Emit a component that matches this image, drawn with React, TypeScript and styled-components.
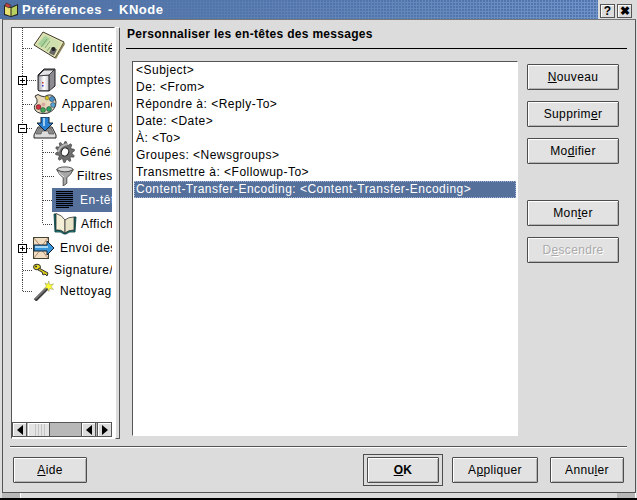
import React from 'react';
import styled, { createGlobalStyle } from 'styled-components';

const GlobalStyle = createGlobalStyle`
  html, body { margin: 0; padding: 0; background: #dcdcdc; }
  body { font-family: "Liberation Sans", Arial, sans-serif; font-size: 12px; color: #000; }
`;

const Window = styled.div`
  width: 637px;
  height: 500px;
  box-sizing: border-box;
  display: flex;
  flex-direction: column;
  background: #dcdcdc;
  border-bottom: 2px solid #000;
  overflow: hidden;
`;

const TitleBar = styled.div`
  height: 19px;
  flex: none;
  display: flex;
  align-items: stretch;
`;

const TitleFill = styled.div`
  flex: 1;
  display: flex;
  align-items: center;
  padding-left: 3px;
  background-color: #6086bd;
  background-image:
    radial-gradient(circle at 1px 1px, #4f74ab 0.7px, transparent 0.8px),
    linear-gradient(90deg, #4f6f9f, #6f93c8);
  background-size: 3px 3px, 100% 100%;
`;

const TitleText = styled.span`
  margin-left: 3px;
  font-weight: 700;
  font-size: 13px;
  color: #fff;
  letter-spacing: 0.5px;
  word-spacing: 2px;
  white-space: pre;
`;

const TitleButtons = styled.div`
  flex: none;
  display: flex;
  align-items: flex-start;
  padding: 4px 5px 0 2px;
  gap: 2px;
`;

const TitleButton = styled.div`
  box-sizing: border-box;
  width: 15px;
  height: 14px;
  border: 1px solid #555;
  box-shadow: inset 1px 1px 0 #fff;
  background: #dcdcdc;
  display: flex;
  align-items: center;
  justify-content: center;
  font-weight: 700;
  font-size: 12px;
`;

const Frame = styled.div`
  flex: 1;
  min-height: 0;
  margin: 0 1px 0 2px;
  border: 1px solid #555;
  border-top: 1px solid #777;
  display: flex;
  flex-direction: column;
  padding: 7px 8px 0 8px;
`;

const Grip = styled.div`
  flex: none;
  height: 5px;
  margin: 0 1px 0 2px;
  display: flex;
  justify-content: space-between;
`;

const GripCorner = styled.div`
  width: 18px;
  background: #b8b8b8;
  border-right: 1px solid #fff;
`;

const Main = styled.div`
  display: flex;
  height: 412px;
  flex: none;
`;

const TreePanel = styled.div`
  width: 104px;
  box-sizing: border-box;
  display: flex;
  flex-direction: column;
  background: #fff;
  border: 1px solid #555;
  border-right-color: #fff;
  border-bottom-color: #fff;
  flex: none;
  overflow: hidden;
`;

const TreeList = styled.div`
  flex: 1;
  overflow: hidden;
`;

const Row = styled.div<{ $h: number }>`
  height: ${({ $h }) => $h}px;
  display: flex;
  align-items: center;
  white-space: nowrap;
  width: 100px;
  overflow: hidden;
`;

const RowIcon = styled.span<{ $selected?: boolean; $lift?: number }>`
  display: flex;
  align-items: center;
  flex: none;
  box-sizing: border-box;
  padding-bottom: ${({ $lift }) => $lift || 0}px;
  background: ${({ $selected }) => ($selected ? '#55709b' : 'transparent')};
  height: 100%;
`;

const RowLabel = styled.span<{ $selected?: boolean; $gap: number }>`
  display: flex;
  align-items: center;
  height: ${({ $selected }) => ($selected ? '100%' : 'auto')};
  padding-left: ${({ $gap }) => $gap}px;
  flex: 1;
  letter-spacing: 0.45px;
  background: ${({ $selected }) => ($selected ? '#55709b' : 'transparent')};
  color: ${({ $selected }) => ($selected ? '#fff' : '#000')};
`;

const HScroll = styled.div`
  height: 15px;
  box-sizing: content-box;
  flex: none;
  display: flex;
  background: #b8b8b8;
  border: 0;
  margin: 0 2px 1px 0;
  gap: 1px;
  outline: 1px solid #555;
  outline-offset: -1px;
`;

const ScrollArrow = styled.div`
  width: 15px;
  flex: none;
  box-sizing: border-box;
  background: #dcdcdc;
  border: 1px solid #555;
  box-shadow: inset 1px 1px 0 #fff;
  display: flex;
  align-items: center;
  justify-content: center;
`;

const ScrollThumb = styled.div`
  width: 22px;
  flex: none;
  box-sizing: border-box;
  border: 1px solid #555;
  border-left: 0;
  background: repeating-linear-gradient(90deg, #e4e4e4 0 2px, #c4c4c4 2px 3px);
  background-size: 12px 100%;
  background-position: center;
  background-repeat: no-repeat;
  background-color: #e4e4e4;
  box-shadow: inset 1px 1px 0 #fff;
`;

const ScrollTrough = styled.div`
  flex: 1;
`;

const Splitter = styled.div`
  width: 5px;
  flex: none;
  box-sizing: border-box;
  border: 1px solid #555;
  border-top-color: #fff;
  border-left-color: #fff;
  background: #dcdcdc;
  height: 412px;
  border-radius: 1px;
`;

const Page = styled.div`
  flex: 1;
  min-width: 0;
  display: flex;
  flex-direction: column;
`;

const Heading = styled.div`
  font-weight: 700;
  font-size: 12px;
  letter-spacing: 0.3px;
  height: 22px;
  flex: none;
  box-sizing: border-box;
  padding: 0 0 7px 1px;
  display: flex;
  align-items: center;
  border-bottom: 1px solid #000;
  margin-left: 6px;
`;

const Content = styled.div`
  flex: 1;
  display: flex;
  padding: 12px 8px 0 12px;
  min-height: 0;
`;

const ListBox = styled.div`
  width: 386px;
  height: 375px;
  box-sizing: border-box;
  flex: none;
  background: #fff;
  border: 1px solid #555;
  border-right-color: #fff;
  border-bottom-color: #fff;
  padding: 0 1px;
  overflow: hidden;
`;

const ListItem = styled.div<{ $selected?: boolean }>`
  height: 17px;
  line-height: 17px;
  padding-left: 2px;
  white-space: pre;
  letter-spacing: 0.48px;
  background: ${({ $selected }) => ($selected ? '#55709b' : 'transparent')};
  color: ${({ $selected }) => ($selected ? '#fff' : '#000')};
  outline: ${({ $selected }) => ($selected ? '1px dotted #9fb4d4' : 'none')};
  outline-offset: -1px;
`;

const ButtonColumn = styled.div`
  flex: none;
  margin-left: 9px;
  padding-top: 3px;
  display: flex;
  flex-direction: column;
  width: 92px;
`;

const ActionSlot = styled.div<{ $top: number }>`
  margin-top: ${({ $top }) => $top}px;
  display: flex;
`;

const PushButton = styled.button<{ $w?: number; $bold?: boolean }>`
  box-sizing: border-box;
  height: 26px;
  width: ${({ $w }) => ($w ? `${$w}px` : '100%')};
  padding: 0;
  border: 1px solid #4d4d4d;
  border-radius: 1px;
  background: #e2e2e2;
  box-shadow: inset 1px 1px 0 #fff, inset -1px -1px 0 #b4b4b4;
  font-family: inherit;
  font-size: 12px;
  letter-spacing: 0.35px;
  font-weight: ${({ $bold }) => ($bold ? 700 : 400)};
  color: ${({ disabled }) => (disabled ? '#aaa' : '#000')};
  text-shadow: ${({ disabled }) => (disabled ? '1px 1px 0 #fff' : 'none')};
`;

const Separator = styled.div`
  height: 1px;
  flex: none;
  background: #555;
  box-shadow: 0 1px 0 #fff;
  margin: 7px 0 0 -1px;
`;

const Footer = styled.div`
  display: flex;
  align-items: center;
  padding: 7px 3px 0 2px;
`;

const Spacer = styled.div`
  flex: 1;
`;

const DefaultRing = styled.div`
  box-sizing: border-box;
  width: 80px;
  height: 32px;
  padding: 2px 3px;
  border: 1px solid #4d4d4d;
  display: flex;
  margin-right: 9px;
`;

const FooterGap = styled.div`
  width: 12px;
`;

const GutterSvg = styled.svg`
  flex: none;
  display: block;
  shape-rendering: crispEdges;
`;

type GutterProps = { w: number; h: number; depth: number; last?: boolean; expander?: '+' | '-' };

// dotted tree lines and the +/- box for one row
const Gutter = ({ w, h, depth, last, expander }: GutterProps) => {
  const mid = Math.round(h / 2);
  const x = depth === 0 ? 10.5 : 30.5;
  return (
    <GutterSvg width={w} height={h}>
      <g stroke="#444" strokeDasharray="1 1" fill="none">
        {depth === 1 && <line x1={10.5} y1={0} x2={10.5} y2={h} />}
        <line x1={x} y1={0} x2={x} y2={last ? mid : h} />
        <line x1={x} y1={mid + 0.5} x2={w} y2={mid + 0.5} />
      </g>
      {expander && (
        <g>
          <rect x={6.5} y={mid - 3.5} width={8} height={8} fill="#fff" stroke="#000" />
          <line x1={8} y1={mid + 0.5} x2={13} y2={mid + 0.5} stroke="#000" />
          {expander === '+' && <line x1={10.5} y1={mid - 2} x2={10.5} y2={mid + 3} stroke="#000" />}
        </g>
      )}
    </GutterSvg>
  );
};

const IdentityIcon = () => (
  <svg width="32" height="28" viewBox="0 0 32 28">
    <path d="M1 14 L10 1 L31 11 L22 27 Z" fill="#e6e2b4" stroke="#3a3a2a" />
    <path d="M3 14 L11 3 L28 11.500 L21 24 Z" fill="#cfe0ae" />
    <path d="M5 13 L12 5 L17 7.500 L10 16 Z" fill="#a8d09a" />
    <path d="M8 16 l6 -8 M12 17 l5 -7 M14 20 l3 -4" stroke="#7fa870" strokeWidth="1" />
    <path d="M19 16 l5 2.500 -3 6 -5 -2.500 Z" fill="#666" />
    <circle cx="20.500" cy="18" r="2" fill="#222" />
    <path d="M22 27 L31 11 L32 13 L23 28 Z" fill="#8a8656" />
  </svg>
);

const ServerIcon = () => (
  <svg width="20" height="24" viewBox="0 0 20 24">
    <defs>
      <linearGradient id="srvFront" x1="0" x2="1" y1="0" y2="0">
        <stop offset="0" stopColor="#aaaab4" />
        <stop offset="0.5" stopColor="#ffffff" />
        <stop offset="1" stopColor="#c8c8d0" />
      </linearGradient>
    </defs>
    <path d="M2 7 L8 1 H19 V18 L13 23 H3 L2 22 Z" fill="#88888f" stroke="#222" />
    <path d="M3 8 H13 V22 H3 Z" fill="url(#srvFront)" />
    <path d="M14 7 L18 2 V17 L14 22 Z" fill="#8c8c92" />
    <path d="M2 8 L8 2 H18 L13 7 Z" fill="#e4e4e8" stroke="#222" strokeWidth=".8" />
    <path d="M13 7 V23" stroke="#222" />
    <rect x="6" y="14" width="1.500" height="1.500" fill="#c33" />
    <rect x="6" y="17" width="1.500" height="1.500" fill="#33c" />
  </svg>
);

const PaletteIcon = () => (
  <svg width="24" height="24" viewBox="0 0 24 24">
    <path d="M2 4 Q5 1 8 4 Q11 6 15 3 Q22 2 23 10 Q23 18 15 21 Q6 23 2 18 Q0 13 4 11 Q5 8 2 4 Z" fill="#e6d9bc" stroke="#333" />
    <circle cx="14" cy="6" r="1.900" fill="#d8c818" stroke="#432" strokeWidth=".4" />
    <circle cx="19" cy="7" r="2.600" fill="#4a90c8" stroke="#234" strokeWidth=".5" />
    <circle cx="20" cy="13" r="2.400" fill="#5aa4d4" stroke="#234" strokeWidth=".5" />
    <circle cx="16" cy="17" r="2.500" fill="#30a060" stroke="#234" strokeWidth=".5" />
    <circle cx="10" cy="18" r="2.500" fill="#40a850" stroke="#234" strokeWidth=".5" />
    <circle cx="5.500" cy="15" r="2.500" fill="#d03040" stroke="#422" strokeWidth=".5" />
    <circle cx="10.500" cy="12.500" r="2" fill="#d8a8a0" />
  </svg>
);

const InboxIcon = () => (
  <svg width="24" height="22" viewBox="0 0 24 22">
    <path d="M5 10 H19 L23 18 V21 H1 V18 Z" fill="#dcdcdc" stroke="#222" />
    <path d="M3 17 H8 L9 14 H15 L16 17 H21 L18 11 H6 Z" fill="#8c8c8c" stroke="#444" strokeWidth=".6" />
    <path d="M8 0 H16 V6 H20 L12 14 L4 6 H8 Z" fill="#2a7fd0" stroke="#123" />
    <path d="M10 1 H12 V9 H10 Z" fill="#9fd0f0" />
  </svg>
);

// tilted gear outline worked out from tooth count
const gearPath = () => {
  const pts: string[] = [];
  const teeth = 10;
  for (let i = 0; i < teeth * 4; i++) {
    const a = (i / (teeth * 4)) * Math.PI * 2;
    const r = i % 4 < 2 ? 10.5 : 7.8;
    const ex = Math.cos(a) * r * 0.95;
    const ey = Math.sin(a) * r * 1.05;
    const px = 11 + ex * 0.92 + ey * 0.28;
    const py = 12 + ey * 0.92 - ex * 0.28;
    pts.push(`${px.toFixed(1)} ${py.toFixed(1)}`);
  }
  return `M${pts.join(' L')} Z`;
};

const GearIcon = () => (
  <svg width="22" height="24" viewBox="0 0 22 24">
    <path d={gearPath()} fill="#6e6e6e" stroke="#333" strokeWidth=".6" />
    <path d="M4 12 Q6 5 14 4" stroke="#b4b4b4" strokeWidth="2" fill="none" />
    <ellipse cx="11" cy="12" rx="3.600" ry="4.200" transform="rotate(25 11 12)" fill="#fff" stroke="#222" />
  </svg>
);

const FunnelIcon = () => (
  <svg width="20" height="20" viewBox="0 0 20 22">
    <ellipse cx="10" cy="4" rx="9" ry="3" fill="#d8d8d8" stroke="#444" />
    <path d="M1 4 Q3 9 8 13 V22 L12 19 V13 Q17 9 19 4 Q10 9 1 4 Z" fill="#a8a8a8" stroke="#444" />
    <path d="M3 7 Q6 10 9 12" stroke="#eee" fill="none" />
  </svg>
);

const LinesIcon = () => (
  <svg width="24" height="24" viewBox="0 0 24 24" shapeRendering="crispEdges">
    <rect x="4" y="3" width="17" height="16" fill="#3d5887" />
    {[3, 5, 7, 9, 11, 13, 15, 17].map(y => (
      <rect key={y} x="4" y={y} width="17" height="1" fill="#000" />
    ))}
    <rect x="4" y="19" width="13" height="1" fill="#000" />
  </svg>
);

const BookIcon = () => (
  <svg width="24" height="22" viewBox="0 0 24 22">
    <path d="M1 1 L2 19 Q8 18 11 21 H13 Q16 18 22 19 L23 4 L21 4 L21 17 Q15 17 12 20 Q8 16 3 17 L3 1 Z" fill="#157a7a" stroke="#033" strokeWidth=".8" />
    <path d="M3 0.500 Q9 2 12 7 V20 Q8 16 3 17 Z" fill="#f4f0d8" stroke="#333" strokeWidth=".8" />
    <path d="M12 7 Q15 4 21 4 V17 Q15 17 12 20 Z" fill="#e8e4c8" stroke="#333" strokeWidth=".8" />
  </svg>
);

const SendIcon = () => (
  <svg width="22" height="22" viewBox="0 0 22 22">
    <rect x="0.500" y="0.500" width="15" height="21" fill="#f0dcc0" stroke="#443" />
    <path d="M1 1 L8 10 L15 1 M1 21 L8 12 L15 21" fill="none" stroke="#b08c70" />
    <path d="M1 8 H14 V4 L21 11 L14 18 V14 H1 Z" fill="#3a94d8" stroke="#123" />
    <path d="M2 9 H15 V11 H2 Z" fill="#a8d8f4" />
  </svg>
);

const KeyIcon = () => (
  <svg width="16" height="14" viewBox="0 0 16 14">
    <ellipse cx="4" cy="4" rx="3.500" ry="2.800" fill="#e8d820" stroke="#333" />
    <path d="M6 5 L15 10 L14 13 L12 11 L10 12 L9 9 L5 7 Z" fill="#d8c818" stroke="#333" />
    <circle cx="3" cy="3.500" r="1" fill="#333" />
  </svg>
);

const WandIcon = () => (
  <svg width="22" height="21" viewBox="0 0 22 22">
    <path d="M1 20 L14 7 L16 9 L3 22 Z" fill="#444" stroke="#222" />
    <path d="M2 20 L14 8" stroke="#aaa" />
    <path d="M16 1 L17 5 L21 4 L18.500 7 L21 10 L17 9 L16 12 L14.500 8.500 L11 9 L13.500 6.500 L12 3 L15 4.500 Z" fill="#ffff30" stroke="#886" strokeWidth=".5" />
  </svg>
);

const Arrow = ({ dir }: { dir: 'left' | 'right' }) => (
  <svg width="6" height="10" viewBox="0 0 6 10">
    <path d={dir === 'left' ? 'M6 0 V10 L0 5 Z' : 'M0 0 V10 L6 5 Z'} fill="#000" />
  </svg>
);

const AppIcon = () => (
  <svg width="16" height="16" viewBox="0 0 16 16">
    <path d="M1 3 L8 5 L15 2 V13 L8 15 L1 13 Z" fill="#222" />
    <path d="M2 4 L7.500 6 V14 L2 12 Z" fill="#e8e070" />
    <path d="M8.500 6 L14 3.500 V12 L8.500 14 Z" fill="#b8d060" />
    <path d="M3 1 L8 3 L6 6 L2 4 Z" fill="#c04040" stroke="#222" strokeWidth=".5" />
  </svg>
);

type TreeRow = {
  label: string; h: number; w: number; depth: number; icon: React.ReactNode;
  gap: number; expander?: '+' | '-'; last?: boolean; selected?: boolean; lift?: number;
};

const tree: TreeRow[] = [
  { label: 'Identité', h: 39, w: 21, depth: 0, icon: <IdentityIcon />, gap: 7, lift: 6 },
  { label: 'Comptes', h: 25, w: 24, depth: 0, icon: <ServerIcon />, gap: 4, expander: '+' },
  { label: 'Apparence', h: 24, w: 21, depth: 0, icon: <PaletteIcon />, gap: 5 },
  { label: 'Lecture des news', h: 24, w: 21, depth: 0, icon: <InboxIcon />, gap: 3, expander: '-' },
  { label: 'Général', h: 24, w: 42, depth: 1, icon: <GearIcon />, gap: 4 },
  { label: 'Filtres', h: 24, w: 43, depth: 1, icon: <FunnelIcon />, gap: 2 },
  { label: 'En-têtes', h: 24, w: 40, depth: 1, icon: <LinesIcon />, gap: 4, selected: true },
  { label: 'Affichage', h: 24, w: 41, depth: 1, icon: <BookIcon />, gap: 4, last: true },
  { label: 'Envoi des news', h: 23, w: 21, depth: 0, icon: <SendIcon />, gap: 5, expander: '+' },
  { label: 'Signature/Identité', h: 21, w: 21, depth: 0, icon: <KeyIcon />, gap: 5 },
  { label: 'Nettoyage', h: 21, w: 21, depth: 0, icon: <WandIcon />, gap: 5, last: true },
];

const headers = [
  '<Subject>',
  'De: <From>',
  'Répondre à: <Reply-To>',
  'Date: <Date>',
  'À: <To>',
  'Groupes: <Newsgroups>',
  'Transmettre à: <Followup-To>',
];

const U = styled.span`
  text-decoration: underline;
`;

export default function App() {
  return (
    <Window>
      <GlobalStyle />
      <TitleBar>
        <TitleFill>
          <AppIcon />
          <TitleText>Préférences - KNode</TitleText>
        </TitleFill>
        <TitleButtons>
          <TitleButton>?</TitleButton>
          <TitleButton>✖</TitleButton>
        </TitleButtons>
      </TitleBar>
      <Frame>
        <Main>
          <TreePanel>
            <TreeList>
              {tree.map(row => (
                <Row key={row.label} $h={row.h}>
                  <Gutter w={row.w} h={row.h} depth={row.depth} expander={row.expander} last={row.last} />
                  <RowIcon $selected={row.selected} $lift={row.lift}>{row.icon}</RowIcon>
                  <RowLabel $selected={row.selected} $gap={row.gap}>{row.label}</RowLabel>
                </Row>
              ))}
            </TreeList>
            <HScroll>
              <ScrollArrow><Arrow dir="left" /></ScrollArrow>
              <ScrollThumb />
              <ScrollTrough />
              <ScrollArrow><Arrow dir="left" /></ScrollArrow>
              <ScrollArrow><Arrow dir="right" /></ScrollArrow>
            </HScroll>
          </TreePanel>
          <Splitter />
          <Page>
            <Heading>Personnaliser les en-têtes des messages</Heading>
            <Content>
              <ListBox>
                {headers.map(h => <ListItem key={h}>{h}</ListItem>)}
                <ListItem $selected>Content-Transfer-Encoding: &lt;Content-Transfer-Encoding&gt;</ListItem>
              </ListBox>
              <ButtonColumn>
                <ActionSlot $top={0}><PushButton><U>N</U>ouveau</PushButton></ActionSlot>
                <ActionSlot $top={11}><PushButton>Supprim<U>e</U>r</PushButton></ActionSlot>
                <ActionSlot $top={11}><PushButton>Mo<U>d</U>ifier</PushButton></ActionSlot>
                <ActionSlot $top={36}><PushButton>Mon<U>t</U>er</PushButton></ActionSlot>
                <ActionSlot $top={11}><PushButton disabled>D<U>e</U>scendre</PushButton></ActionSlot>
              </ButtonColumn>
            </Content>
          </Page>
        </Main>
        <Separator />
        <Footer>
          <PushButton $w={74}><U>A</U>ide</PushButton>
          <Spacer />
          <DefaultRing><PushButton $bold><U>O</U>K</PushButton></DefaultRing>
          <PushButton $w={86}>A<U>p</U>pliquer</PushButton>
          <FooterGap />
          <PushButton $w={74}>Annu<U>l</U>er</PushButton>
        </Footer>
      </Frame>
      <Grip><GripCorner /><GripCorner /></Grip>
    </Window>
  );
}
